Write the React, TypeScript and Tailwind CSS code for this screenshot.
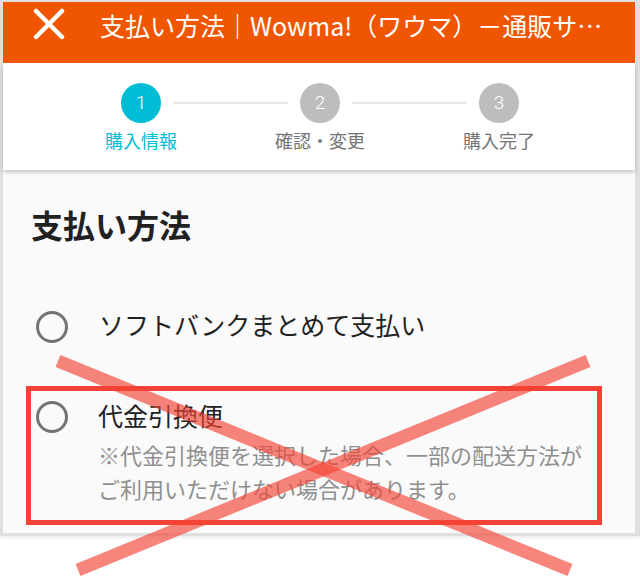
const font = "font-['Roboto','Noto_Sans_CJK_JP',sans-serif]";

function Radio() {
  return <span className="block h-[32px] w-[32px] shrink-0 rounded-full border-[3px] border-[#737373]" />;
}

function StepCircle({ n, active }: { n: number; active?: boolean }) {
  return (
    <div
      className={`flex h-[40px] w-[40px] shrink-0 items-center justify-center rounded-full text-[19px] font-light text-white ${
        active ? "bg-[#00bcd4]" : "bg-[#bdbdbd]"
      }`}
    >
      {n}
    </div>
  );
}

export default function App() {
  return (
    <div className={`relative h-[580px] w-[640px] bg-white ${font}`}>
      <div className="w-[640px] border-t-2 border-b-[3px] border-l-[3px] border-r-[5px] border-[#e0e0e0] shadow-[0_2px_3px_rgba(0,0,0,0.08)]">
        {/* toolbar */}
        <header className="flex h-[61px] items-start bg-[#f05600] pl-[30px]">
          <svg width="32" height="32" viewBox="0 0 32 32" className="mt-[6px] shrink-0">
            <path d="M3 3 L29 29 M29 3 L3 29" stroke="white" strokeWidth="4.5" strokeLinecap="round" />
          </svg>
          <h1 className="ml-[35px] mt-[7px] whitespace-nowrap font-['Noto_Sans_CJK_JP',sans-serif] text-[25px] leading-[32px] text-white">
            支払い方法｜Wowma!（ワウマ）－通販サ…
          </h1>
        </header>

        {/* stepper */}
        <div className="relative z-10 h-[107px] bg-white pt-[20px] shadow-[0_2px_4px_rgba(0,0,0,0.22)]">
          <div className="flex items-center pl-[118px]">
            <StepCircle n={1} active />
            <div className="mx-[12px] h-[2px] w-[115px] bg-[#e8e8e8]" />
            <StepCircle n={2} />
            <div className="mx-[12px] h-[2px] w-[115px] bg-[#e8e8e8]" />
            <StepCircle n={3} />
          </div>
          <div className="mt-[7px] flex gap-[59px] pl-[78px] text-[18px] leading-[24px]">
            <span className="w-[120px] text-center text-[#00bcd4]">購入情報</span>
            <span className="w-[120px] text-center text-[#757575]">確認・変更</span>
            <span className="w-[120px] text-center text-[#757575]">購入完了</span>
          </div>
        </div>

        {/* content */}
        <section className="bg-[#fafafa] px-[23px] pt-[37px] pb-[8px]">
          <h2 className="pl-[5px] text-[32px] font-bold leading-[40px] text-[#212121]">支払い方法</h2>

          <div className="mt-[62px] flex items-center pl-[10px]">
            <Radio />
            <span className="ml-[31px] text-[25px] leading-[36px] text-[#212121]">ソフトバンクまとめて支払い</span>
          </div>

          <div className="mt-[41px] flex w-[576px] items-start border-[5px] border-[#f44336] pb-[12px] pl-[5px]">
            <div className="mt-[10px]">
              <Radio />
            </div>
            <div className="ml-[30px] pt-[9px]">
              <p className="text-[25px] leading-[36px] text-[#212121]">代金引換便</p>
              <p className="mt-[4px] text-[22px] leading-[34px] text-[#8f8f8f]">
                ※代金引換便を選択した場合、一部の配送方法が
                <br />
                ご利用いただけない場合があります。
              </p>
            </div>
          </div>
        </section>
      </div>

      {/* crossed-out annotation */}
      <svg className="pointer-events-none absolute inset-0" width="640" height="580" viewBox="0 0 640 580">
        <g stroke="rgba(244,67,54,0.65)" strokeWidth="13">
          <line x1="58" y1="361" x2="570" y2="570" />
          <line x1="588" y1="361" x2="78" y2="570" />
        </g>
      </svg>
    </div>
  );
}
